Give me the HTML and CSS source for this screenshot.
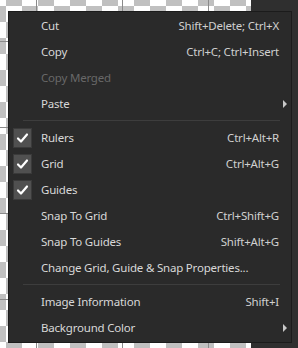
FILE: index.html
```html
<!DOCTYPE html>
<html>
<head>
<meta charset="utf-8">
<link rel="stylesheet" href="styles.css">
</head>
<body>
<div class="stage">
  <div class="canvas"></div>
  <div class="panel"></div>
</div>
<div class="menu">
  <div class="item"><span class="check"></span><span class="label">Cut</span><span class="key">Shift+Delete; Ctrl+X</span><span class="sub"></span></div>
  <div class="item"><span class="check"></span><span class="label">Copy</span><span class="key">Ctrl+C; Ctrl+Insert</span><span class="sub"></span></div>
  <div class="item disabled"><span class="check"></span><span class="label">Copy Merged</span><span class="key"></span><span class="sub"></span></div>
  <div class="item"><span class="check"></span><span class="label">Paste</span><span class="key"></span><span class="sub"><span class="arrow"></span></span></div>
  <div class="sep"></div>
  <div class="item"><span class="check"><span class="box"><svg viewBox="0 0 19 20" width="19" height="20"><path d="M5 10.5 L8 13.5 L14 6.5" fill="none" stroke="#fff" stroke-width="2.2" stroke-linecap="round" stroke-linejoin="round"/></svg></span></span><span class="label">Rulers</span><span class="key">Ctrl+Alt+R</span><span class="sub"></span></div>
  <div class="item"><span class="check"><span class="box"><svg viewBox="0 0 19 20" width="19" height="20"><path d="M5 10.5 L8 13.5 L14 6.5" fill="none" stroke="#fff" stroke-width="2.2" stroke-linecap="round" stroke-linejoin="round"/></svg></span></span><span class="label">Grid</span><span class="key">Ctrl+Alt+G</span><span class="sub"></span></div>
  <div class="item"><span class="check"><span class="box"><svg viewBox="0 0 19 20" width="19" height="20"><path d="M5 10.5 L8 13.5 L14 6.5" fill="none" stroke="#fff" stroke-width="2.2" stroke-linecap="round" stroke-linejoin="round"/></svg></span></span><span class="label">Guides</span><span class="key"></span><span class="sub"></span></div>
  <div class="item"><span class="check"></span><span class="label">Snap To Grid</span><span class="key">Ctrl+Shift+G</span><span class="sub"></span></div>
  <div class="item"><span class="check"></span><span class="label">Snap To Guides</span><span class="key">Shift+Alt+G</span><span class="sub"></span></div>
  <div class="item"><span class="check"></span><span class="label">Change Grid, Guide &amp; Snap Properties...</span><span class="key"></span><span class="sub"></span></div>
  <div class="sep"></div>
  <div class="item"><span class="check"></span><span class="label">Image Information</span><span class="key">Shift+I</span><span class="sub"></span></div>
  <div class="item"><span class="check"></span><span class="label">Background Color</span><span class="key"></span><span class="sub"><span class="arrow"></span></span></div>
</div>
</body>
</html>
```
FILE: styles.css
```css
html, body {
  margin: 0;
  padding: 0;
}
body {
  width: 298px;
  height: 348px;
  overflow: hidden;
  position: relative;
  font-family: "Noto Sans", "Open Sans", sans-serif;
  font-size: 11.5px;
  letter-spacing: -0.2px;
}
.stage {
  display: flex;
  width: 298px;
  height: 348px;
}
.canvas {
  width: 251px;
  height: 348px;
  background-color: #fff;
  background-image:
    linear-gradient(90deg, transparent 36px, #8a8a8a 36px, #8a8a8a 37px, transparent 37px),
    linear-gradient(180deg, transparent 41px, #8a8a8a 41px, #8a8a8a 42px, transparent 42px),
    conic-gradient(#c0c0c0 25%, #fff 0 50%, #c0c0c0 0 75%, #fff 0);
  background-size: 86px 100%, 100% 86px, 32px 32px;
  background-repeat: repeat-x, repeat-y, repeat;
  background-position: 0 0, 0 0, -10px -10px;
}
.panel {
  flex: 1;
  background: #2f2f2f;
}
.menu {
  position: absolute;
  left: 8px;
  top: 11px;
  width: 282px;
  height: 329px;
  background: #2a2a2a;
  border: 1px solid #1b1b1b;
  padding-top: 1px;
  box-sizing: content-box;
  color: #d8d8d8;
}
.item {
  display: grid;
  grid-template-columns: 32px 1fr auto 12px;
  align-items: center;
  height: 26px;
  line-height: 26px;
  white-space: nowrap;
}
.item.disabled {
  color: #686868;
}
.check {
  display: flex;
  align-items: center;
  padding-left: 4px;
  height: 26px;
}
.box {
  display: block;
  flex: none;
  width: 19px;
  height: 20px;
  box-sizing: border-box;
  background: #505050;
  border: 1px solid #3a3a3a;
  position: relative;
}
.box svg {
  display: block;
  position: absolute;
  left: -1px;
  top: -1px;
}
.key {
  color: #d0d0d0;
}
.sub {
  display: flex;
  align-items: center;
  justify-content: flex-end;
  height: 26px;
}
.arrow {
  width: 0;
  height: 0;
  border-top: 4px solid transparent;
  border-bottom: 4px solid transparent;
  border-left: 4px solid #c8c8c8;
  margin-right: 4px;
}
.sep {
  height: 1px;
  background: #3d3d3d;
  margin: 3px 11px 4px 14px;
}
```
